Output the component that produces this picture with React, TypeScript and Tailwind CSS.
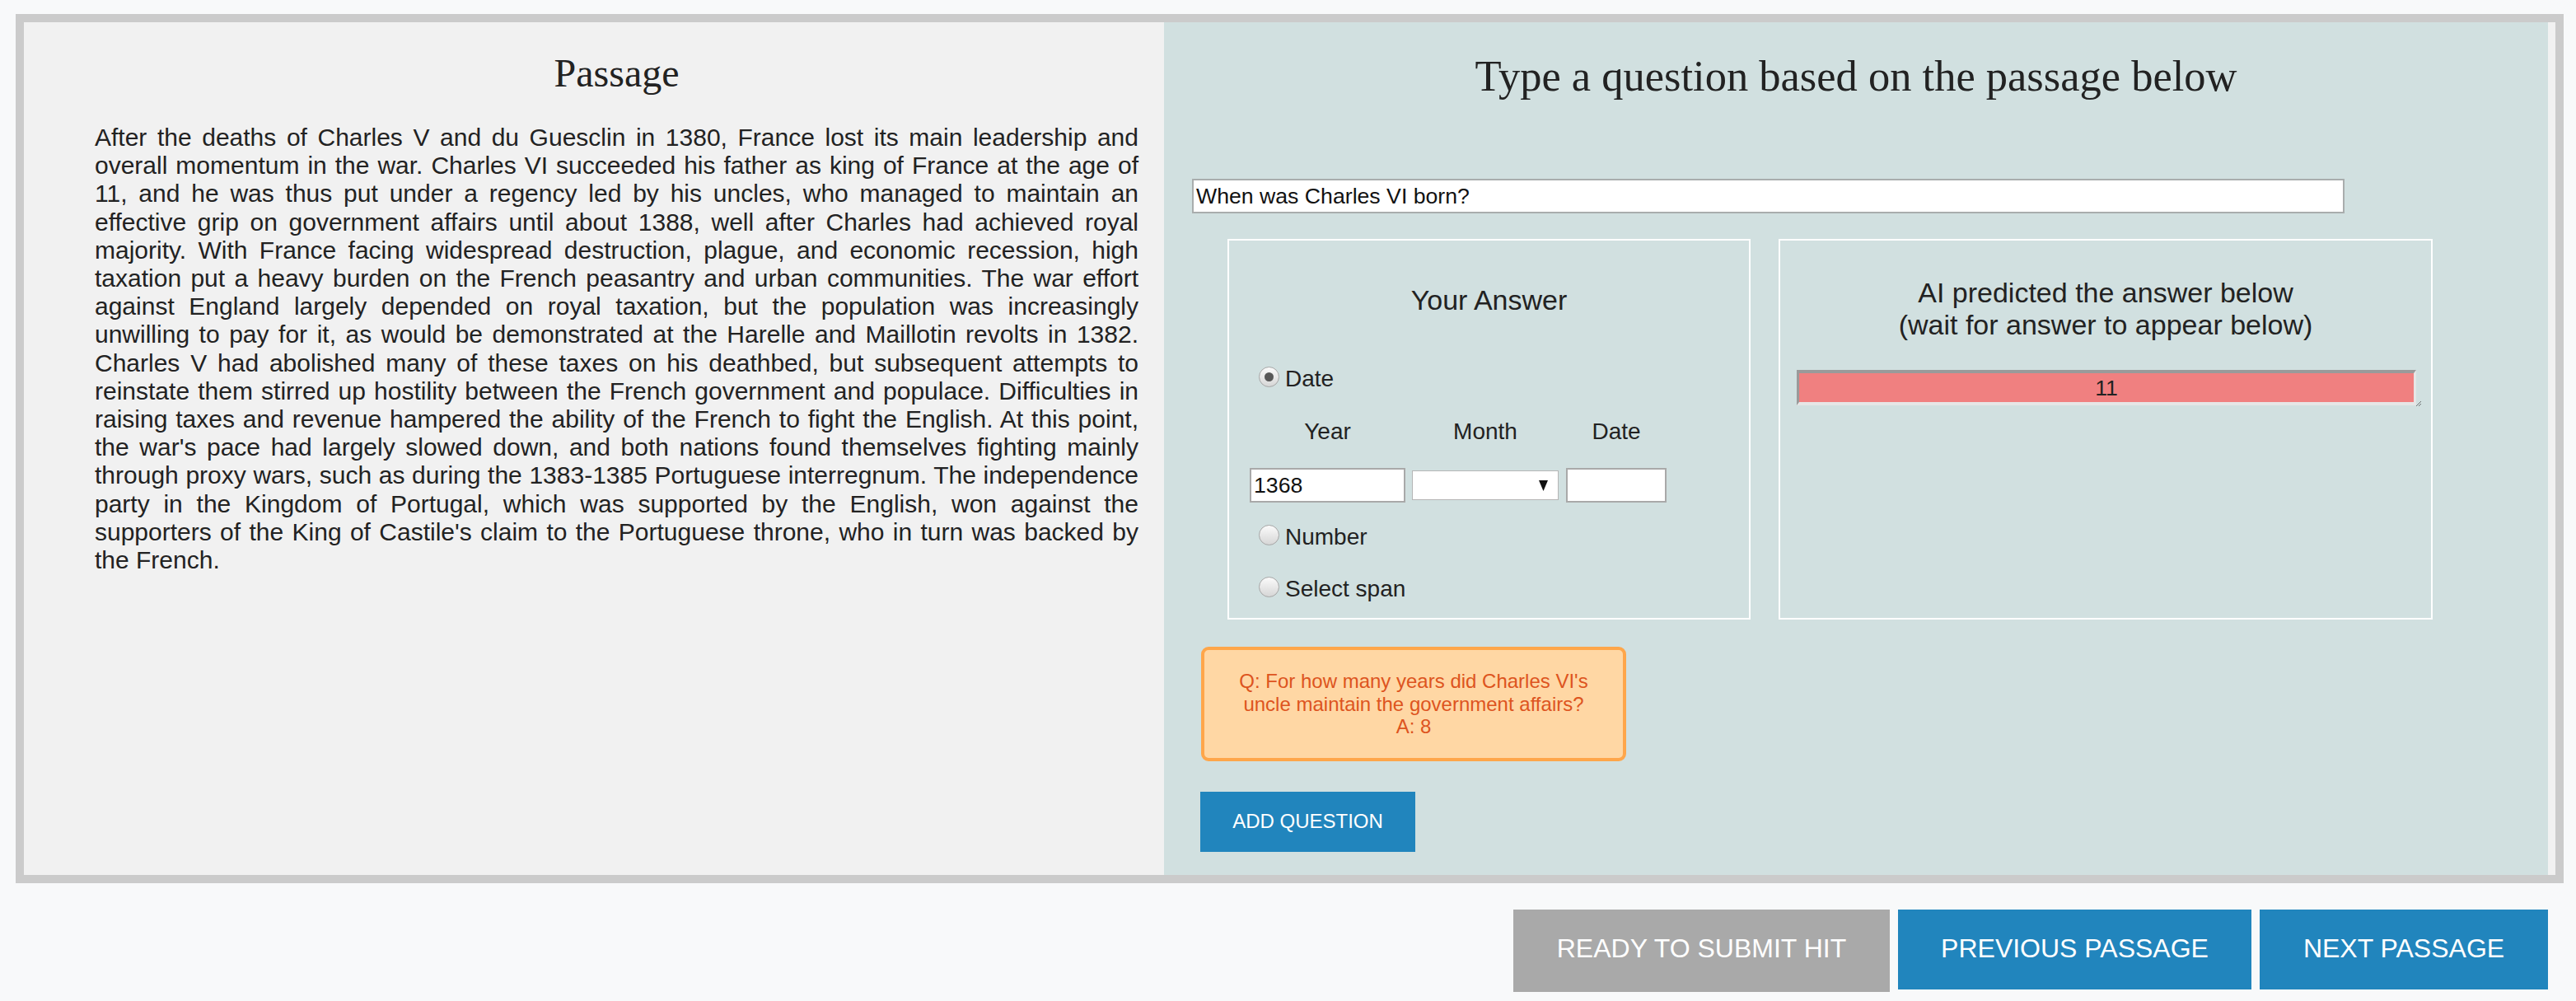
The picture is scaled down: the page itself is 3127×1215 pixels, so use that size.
import React from "react";

const passage =
  "After the deaths of Charles V and du Guesclin in 1380, France lost its main leadership and overall momentum in the war. Charles VI succeeded his father as king of France at the age of 11, and he was thus put under a regency led by his uncles, who managed to maintain an effective grip on government affairs until about 1388, well after Charles had achieved royal majority. With France facing widespread destruction, plague, and economic recession, high taxation put a heavy burden on the French peasantry and urban communities. The war effort against England largely depended on royal taxation, but the population was increasingly unwilling to pay for it, as would be demonstrated at the Harelle and Maillotin revolts in 1382. Charles V had abolished many of these taxes on his deathbed, but subsequent attempts to reinstate them stirred up hostility between the French government and populace. Difficulties in raising taxes and revenue hampered the ability of the French to fight the English. At this point, the war's pace had largely slowed down, and both nations found themselves fighting mainly through proxy wars, such as during the 1383-1385 Portuguese interregnum. The independence party in the Kingdom of Portugal, which was supported by the English, won against the supporters of the King of Castile's claim to the Portuguese throne, who in turn was backed by the French.";

function Radio({ checked, label }: { checked?: boolean; label: string }) {
  return (
    <div className="flex items-center h-[32px] pl-[36px]">
      <span className="relative flex items-center justify-center w-[25px] h-[25px] rounded-full border border-[#a6a6a6] bg-gradient-to-b from-[#fbfbfb] to-[#d6d6d6] -mt-[5px]">
        {checked && (
          <span className="w-[11px] h-[11px] rounded-full bg-[#585858]" />
        )}
      </span>
      <span className="ml-[7px] text-[28px] leading-[32px] text-[#222]">{label}</span>
    </div>
  );
}

export default function App() {
  return (
    <div className="h-[1215px] overflow-hidden w-[3127px] bg-[#f8f9fa] font-['Liberation_Sans',Arial,sans-serif] text-[#222] pt-[17px]">
      {/* main box */}
      <div className="ml-[19px] w-[3093px] border-[10px] border-[#cbcbcb] bg-[#f1f1f1]">
        <div className="flex h-[1035px]">
          {/* left panel */}
          <div className="w-[1384px] bg-[#f1f1f1] pl-[86px] pr-[31px] pt-[34px]">
            <h2 className="text-center font-['Liberation_Serif',serif] text-[48px] leading-[55px] text-[#222]">
              Passage
            </h2>
            <p className="mt-[34px] text-[30px] leading-[34.2px] text-justify text-[#222]">
              {passage}
            </p>
          </div>

          {/* right panel */}
          <div className="w-[1680px] bg-[#d1e0e0] pt-[35px]">
            <h1 className="text-center font-['Liberation_Serif',serif] text-[52.5px] leading-[60px] text-[#222]">
              Type a question based on the passage below
            </h1>

            <div className="ml-[34px] mt-[95px] w-[1399px] h-[42px] border-2 border-[#a9adad] bg-white flex items-center pl-[3px] text-[26.67px] text-[#111]">
              When was Charles VI born?
            </div>

            <div className="flex ml-[77px] mt-[31px] gap-[34px]">
              {/* Your answer */}
              <div className="w-[635px] h-[462px] border-2 border-white">
                <div className="mt-[53px] text-center text-[34px] leading-[39px] text-[#222]">
                  Your Answer
                </div>
                <div className="mt-[60px]">
                  <Radio checked label="Date" />
                </div>
                <div className="mt-[32px] flex pl-[25px] text-[28px] leading-[32px] text-[#222]">
                  <div className="w-[189px] text-center">Year</div>
                  <div className="w-[178px] ml-[8px] text-center">Month</div>
                  <div className="w-[122px] ml-[9px] text-center">Date</div>
                </div>
                <div className="mt-[28px] flex items-center pl-[25px] h-[42px]">
                  <div className="w-[189px] h-[42px] border-2 border-[#a9a9a9] bg-white flex items-center pl-[3px] text-[26.67px] text-[#111]">
                    1368
                  </div>
                  <div className="relative ml-[8px] w-[178px] h-[36px] border border-[#b5b5b5] bg-white">
                    <svg
                      className="absolute right-[12px] top-[11px]"
                      width="11"
                      height="13"
                      viewBox="0 0 11 13"
                    >
                      <polygon points="0,0 11,0 5.5,13" fill="#111" />
                    </svg>
                  </div>
                  <div className="ml-[9px] w-[122px] h-[42px] border-2 border-[#a9a9a9] bg-white" />
                </div>
                <div className="mt-[26px]">
                  <Radio label="Number" />
                </div>
                <div className="mt-[31px]">
                  <Radio label="Select span" />
                </div>
              </div>

              {/* AI box */}
              <div className="w-[794px] h-[462px] border-2 border-white">
                <div className="mt-[44px] text-center text-[34px] leading-[39px] text-[#222]">
                  AI predicted the answer below
                  <br />
                  (wait for answer to appear below)
                </div>
                <div className="relative mt-[35px] ml-[20px] w-[752px] h-[43px] bg-[#f08080] border-t-[4px] border-l-[3px] border-b-[4px] border-r-[3px] border-t-[#9a9a9a] border-l-[#9a9a9a] border-b-[#e6e6e6] border-r-[#e6e6e6] flex items-center justify-center text-[26.67px] text-[#222]">
                  11
                  <svg
                    className="absolute -right-[10px] -bottom-[6px]"
                    width="8"
                    height="8"
                    viewBox="0 0 8 8"
                  >
                    <line x1="1" y1="7" x2="7" y2="1" stroke="#555" strokeWidth="0.8" />
                    <line x1="4" y1="7" x2="7" y2="4" stroke="#555" strokeWidth="0.8" />
                  </svg>
                </div>
              </div>
            </div>

            {/* Previous question card */}
            <div className="ml-[45px] mt-[33px] w-[516px] h-[139px] rounded-[9px] border-4 border-[#ffa64a] bg-[#ffd7a4] flex flex-col items-center justify-center text-center text-[24px] leading-[27.6px] text-[#dd5420]">
              <div>Q: For how many years did Charles VI's</div>
              <div>uncle maintain the government affairs?</div>
              <div>A: 8</div>
            </div>

            <button className="ml-[44px] mt-[37px] w-[261px] h-[73px] bg-[#2185bd] text-white text-[24px] flex items-center justify-center pb-[2px]">
              ADD QUESTION
            </button>
          </div>
        </div>
      </div>

      {/* bottom buttons */}
      <div className="flex justify-end items-start gap-[10px] pr-[34px] mt-[32px]">
        <button className="w-[457px] h-[100px] bg-[#a9a9a9] text-white text-[32px] flex items-center justify-center pb-[6px]">
          READY TO SUBMIT HIT
        </button>
        <button className="w-[429px] h-[97px] bg-[#2185bd] text-white text-[32px] flex items-center justify-center pb-[3px]">
          PREVIOUS PASSAGE
        </button>
        <button className="w-[350px] h-[97px] bg-[#2185bd] text-white text-[32px] flex items-center justify-center pb-[3px]">
          NEXT PASSAGE
        </button>
      </div>
    </div>
  );
}
